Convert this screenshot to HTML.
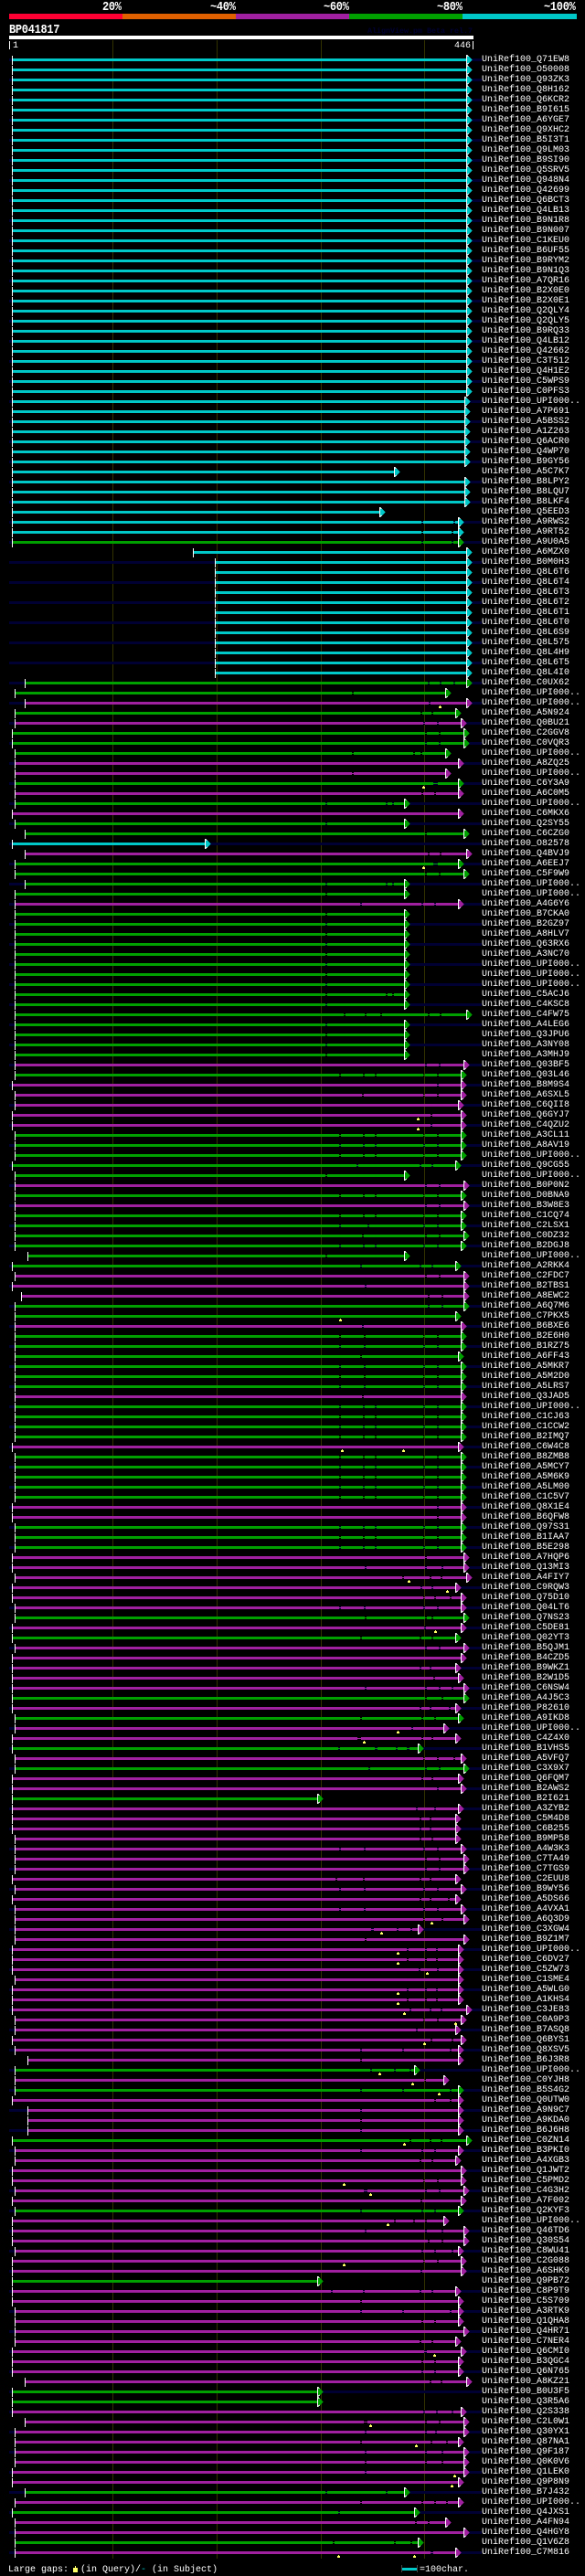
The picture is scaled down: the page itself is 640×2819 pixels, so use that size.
<!DOCTYPE html>
<html><head><meta charset="utf-8"><title>BP041817</title>
<style>
html,body{margin:0;padding:0;background:#000}
body{position:relative;width:640px;height:2819px;overflow:hidden;color:#fff;font:10px/11px "Liberation Mono","DejaVu Sans Mono",monospace}
.a{position:absolute;white-space:pre}
.b{font:bold 12px/13px "Liberation Mono",monospace;letter-spacing:-.3px;transform-origin:0 0;transform:scaleY(1.12)}
.l{position:absolute;top:44px;width:1px;height:2756px;background:#333300}
#R{position:absolute;left:0;top:60px;width:640px}
#R p{margin:0;height:11px;line-height:11px;padding-left:527px;position:relative;white-space:pre}
#R p:nth-child(odd){background:linear-gradient(#000033,#000033) no-repeat 10px 4px/517px 3px}
#R svg{position:absolute;left:0;top:0;width:640px;height:11px;overflow:visible;shape-rendering:crispEdges}
#R path{stroke:currentColor;stroke-width:3;fill:none}
#R path.h{stroke-width:1}
#D .w{stroke:#fff;stroke-width:1;fill:none;shape-rendering:crispEdges}
#D .f{stroke:none;fill:currentColor;shape-rendering:crispEdges}
#D .y{stroke:none;fill:#ffff66;shape-rendering:crispEdges}
.c{color:#00c8c8}.g{color:#00a000}.m{color:#a020a0}
</style></head><body>
<svg id="D" width="0" height="0" style="position:absolute"><defs>
<g id="a"><path class="f" d="M1 0L6.500 5.500 1 11z"/><path class="w" d="M.5 0V11"/><path class="w" d="M1 .5l1.500 1.500M1 10.500l1.500-1.500"/></g>
<path id="t" class="w" d="M.5 1V11"/>
<path id="y" class="y" d="M1 8h1v1h1v2h-3v-2h1z"/>
</defs></svg>

<div class="a b" style="left:112px;top:1px">20%</div>
<div class="a b" style="left:230px;top:1px">~40%</div>
<div class="a b" style="left:354px;top:1px">~60%</div>
<div class="a b" style="left:478px;top:1px">~80%</div>
<div class="a b" style="left:595px;top:1px">~100%</div>
<div class="a" style="left:10px;top:15px;width:124px;height:6px;background:#ff0033"></div>
<div class="a" style="left:134px;top:15px;width:124px;height:6px;background:#e06000"></div>
<div class="a" style="left:258px;top:15px;width:124px;height:6px;background:#a020a0"></div>
<div class="a" style="left:382px;top:15px;width:124px;height:6px;background:#00a000"></div>
<div class="a" style="left:506px;top:15px;width:125px;height:6px;background:#00c8c8"></div>
<div class="a b" style="left:10px;top:26px">BP041817</div>
<div class="a" style="left:402px;top:29px;font:bold 8.33px/10px 'Liberation Mono',monospace;color:#000033">AlignView.pm Beta rel.7</div>
<div class="a" style="left:10px;top:39px;width:508px;height:4px;background:#fff"></div>
<div class="a" style="left:10px;top:45px;width:1px;height:9px;background:#fff"></div>
<div class="a" style="left:14px;top:45px">1</div>
<div class="a" style="left:497px;top:45px">446</div>
<div class="a" style="left:517px;top:45px;width:1px;height:9px;background:#fff"></div>
<div class="l" style="left:123px"></div><div class="l" style="left:237px"></div><div class="l" style="left:351px"></div><div class="l" style="left:464px"></div>

<div id="R">
<p><svg class="c"><path d="M14 5.5H510"/><use href="#a" x="510"/><use href="#t" x="13"/></svg>UniRef100_Q71EW8</p>
<p><svg class="c"><path d="M14 5.5H510"/><use href="#a" x="510"/><use href="#t" x="13"/></svg>UniRef100_O50008</p>
<p><svg class="c"><path d="M14 5.5H510"/><use href="#a" x="510"/><use href="#t" x="13"/></svg>UniRef100_Q93ZK3</p>
<p><svg class="c"><path d="M14 5.5H510"/><use href="#a" x="510"/><use href="#t" x="13"/></svg>UniRef100_Q8H162</p>
<p><svg class="c"><path d="M14 5.5H510"/><use href="#a" x="510"/><use href="#t" x="13"/></svg>UniRef100_Q6KCR2</p>
<p><svg class="c"><path d="M14 5.5H510"/><use href="#a" x="510"/><use href="#t" x="13"/></svg>UniRef100_B9I615</p>
<p><svg class="c"><path d="M14 5.5H510"/><use href="#a" x="510"/><use href="#t" x="13"/></svg>UniRef100_A6YGE7</p>
<p><svg class="c"><path d="M14 5.5H510"/><use href="#a" x="510"/><use href="#t" x="13"/></svg>UniRef100_Q9XHC2</p>
<p><svg class="c"><path d="M14 5.5H510"/><use href="#a" x="510"/><use href="#t" x="13"/></svg>UniRef100_B5I3T1</p>
<p><svg class="c"><path d="M14 5.5H510"/><use href="#a" x="510"/><use href="#t" x="13"/></svg>UniRef100_Q9LM03</p>
<p><svg class="c"><path d="M14 5.5H510"/><use href="#a" x="510"/><use href="#t" x="13"/></svg>UniRef100_B9SI90</p>
<p><svg class="c"><path d="M14 5.5H510"/><use href="#a" x="510"/><use href="#t" x="13"/></svg>UniRef100_Q5SRV5</p>
<p><svg class="c"><path d="M14 5.5H510"/><use href="#a" x="510"/><use href="#t" x="13"/></svg>UniRef100_Q948N4</p>
<p><svg class="c"><path d="M14 5.5H510"/><use href="#a" x="510"/><use href="#t" x="13"/></svg>UniRef100_Q42699</p>
<p><svg class="c"><path d="M14 5.5H510"/><use href="#a" x="510"/><use href="#t" x="13"/></svg>UniRef100_Q6BCT3</p>
<p><svg class="c"><path d="M14 5.5H510"/><use href="#a" x="510"/><use href="#t" x="13"/></svg>UniRef100_Q4LB13</p>
<p><svg class="c"><path d="M14 5.5H510"/><use href="#a" x="510"/><use href="#t" x="13"/></svg>UniRef100_B9N1R8</p>
<p><svg class="c"><path d="M14 5.5H510"/><use href="#a" x="510"/><use href="#t" x="13"/></svg>UniRef100_B9N007</p>
<p><svg class="c"><path d="M14 5.5H510"/><use href="#a" x="510"/><use href="#t" x="13"/></svg>UniRef100_C1KEU0</p>
<p><svg class="c"><path d="M14 5.5H510"/><use href="#a" x="510"/><use href="#t" x="13"/></svg>UniRef100_B6UF55</p>
<p><svg class="c"><path d="M14 5.5H510"/><use href="#a" x="510"/><use href="#t" x="13"/></svg>UniRef100_B9RYM2</p>
<p><svg class="c"><path d="M14 5.5H510"/><use href="#a" x="510"/><use href="#t" x="13"/></svg>UniRef100_B9N1Q3</p>
<p><svg class="c"><path d="M14 5.5H510"/><use href="#a" x="510"/><use href="#t" x="13"/></svg>UniRef100_A7QR16</p>
<p><svg class="c"><path d="M14 5.5H510"/><use href="#a" x="510"/><use href="#t" x="13"/></svg>UniRef100_B2X0E0</p>
<p><svg class="c"><path d="M14 5.5H510"/><use href="#a" x="510"/><use href="#t" x="13"/></svg>UniRef100_B2X0E1</p>
<p><svg class="c"><path d="M14 5.5H510"/><use href="#a" x="510"/><use href="#t" x="13"/></svg>UniRef100_Q2QLY4</p>
<p><svg class="c"><path d="M14 5.5H510"/><use href="#a" x="510"/><use href="#t" x="13"/></svg>UniRef100_Q2QLY5</p>
<p><svg class="c"><path d="M14 5.5H510"/><use href="#a" x="510"/><use href="#t" x="13"/></svg>UniRef100_B9RQ33</p>
<p><svg class="c"><path d="M14 5.5H510"/><use href="#a" x="510"/><use href="#t" x="13"/></svg>UniRef100_Q4LB12</p>
<p><svg class="c"><path d="M14 5.5H510"/><use href="#a" x="510"/><use href="#t" x="13"/></svg>UniRef100_Q42662</p>
<p><svg class="c"><path d="M14 5.5H510"/><use href="#a" x="510"/><use href="#t" x="13"/></svg>UniRef100_C3T512</p>
<p><svg class="c"><path d="M14 5.5H510"/><use href="#a" x="510"/><use href="#t" x="13"/></svg>UniRef100_Q4H1E2</p>
<p><svg class="c"><path d="M14 5.5H510"/><use href="#a" x="510"/><use href="#t" x="13"/></svg>UniRef100_C5WPS9</p>
<p><svg class="c"><path d="M14 5.5H510"/><use href="#a" x="510"/><use href="#t" x="13"/></svg>UniRef100_C0PFS3</p>
<p><svg class="c"><path d="M14 5.5H508"/><use href="#a" x="508"/><use href="#t" x="13"/></svg>UniRef100_UPI000..</p>
<p><svg class="c"><path d="M14 5.5H508"/><use href="#a" x="508"/><use href="#t" x="13"/></svg>UniRef100_A7P691</p>
<p><svg class="c"><path d="M14 5.5H508"/><use href="#a" x="508"/><use href="#t" x="13"/></svg>UniRef100_A5BSS2</p>
<p><svg class="c"><path d="M14 5.5H508"/><use href="#a" x="508"/><use href="#t" x="13"/></svg>UniRef100_A1Z263</p>
<p><svg class="c"><path d="M14 5.5H508"/><use href="#a" x="508"/><use href="#t" x="13"/></svg>UniRef100_Q6ACR0</p>
<p><svg class="c"><path d="M14 5.5H508"/><use href="#a" x="508"/><use href="#t" x="13"/></svg>UniRef100_Q4WP70</p>
<p><svg class="c"><path d="M14 5.5H508"/><use href="#a" x="508"/><use href="#t" x="13"/></svg>UniRef100_B9GY56</p>
<p><svg class="c"><path d="M14 5.5H431"/><use href="#a" x="431"/><use href="#t" x="13"/></svg>UniRef100_A5C7K7</p>
<p><svg class="c"><path d="M14 5.5H508"/><use href="#a" x="508"/><use href="#t" x="13"/></svg>UniRef100_B8LPY2</p>
<p><svg class="c"><path d="M14 5.5H508"/><use href="#a" x="508"/><use href="#t" x="13"/></svg>UniRef100_B8LQU7</p>
<p><svg class="c"><path d="M14 5.5H508"/><use href="#a" x="508"/><use href="#t" x="13"/></svg>UniRef100_B8LKF4</p>
<p><svg class="c"><path d="M14 5.5H415"/><use href="#a" x="415"/><use href="#t" x="13"/></svg>UniRef100_Q5EED3</p>
<p><svg class="c"><path class="h" d="M14 5.5H501"/><path d="M14 5.5H461m2 0H496m2 0H501"/><use href="#a" x="501"/><use href="#t" x="13"/></svg>UniRef100_A9RWS2</p>
<p><svg class="c"><path class="h" d="M14 5.5H501"/><path d="M14 5.5H461m2 0H494m2 0H501"/><use href="#a" x="501"/><use href="#t" x="13"/></svg>UniRef100_A9RT52</p>
<p><svg class="g"><path class="h" d="M14 5.5H501"/><path d="M14 5.5H461m2 0H494m2 0H501"/><use href="#a" x="501"/><use href="#t" x="13"/></svg>UniRef100_A9U0A5</p>
<p><svg class="c"><path d="M212 5.5H510"/><use href="#a" x="510"/><use href="#t" x="211"/></svg>UniRef100_A6MZX0</p>
<p><svg class="c"><path d="M236 5.5H510"/><use href="#a" x="510"/><use href="#t" x="235"/></svg>UniRef100_B0M0H3</p>
<p><svg class="c"><path d="M236 5.5H510"/><use href="#a" x="510"/><use href="#t" x="235"/></svg>UniRef100_Q8L6T6</p>
<p><svg class="c"><path d="M236 5.5H510"/><use href="#a" x="510"/><use href="#t" x="235"/></svg>UniRef100_Q8L6T4</p>
<p><svg class="c"><path d="M236 5.5H510"/><use href="#a" x="510"/><use href="#t" x="235"/></svg>UniRef100_Q8L6T3</p>
<p><svg class="c"><path d="M236 5.5H510"/><use href="#a" x="510"/><use href="#t" x="235"/></svg>UniRef100_Q8L6T2</p>
<p><svg class="c"><path d="M236 5.5H510"/><use href="#a" x="510"/><use href="#t" x="235"/></svg>UniRef100_Q8L6T1</p>
<p><svg class="c"><path d="M236 5.5H510"/><use href="#a" x="510"/><use href="#t" x="235"/></svg>UniRef100_Q8L6T0</p>
<p><svg class="c"><path d="M236 5.5H510"/><use href="#a" x="510"/><use href="#t" x="235"/></svg>UniRef100_Q8L6S9</p>
<p><svg class="c"><path d="M236 5.5H510"/><use href="#a" x="510"/><use href="#t" x="235"/></svg>UniRef100_Q8L575</p>
<p><svg class="c"><path d="M236 5.5H510"/><use href="#a" x="510"/><use href="#t" x="235"/></svg>UniRef100_Q8L4H9</p>
<p><svg class="c"><path d="M236 5.5H510"/><use href="#a" x="510"/><use href="#t" x="235"/></svg>UniRef100_Q8L6T5</p>
<p><svg class="c"><path d="M236 5.5H510"/><use href="#a" x="510"/><use href="#t" x="235"/></svg>UniRef100_Q8L4I0</p>
<p><svg class="g"><path class="h" d="M28 5.5H510"/><path d="M28 5.5H468m2 0H481m2 0H496m2 0H510"/><use href="#a" x="510"/><use href="#t" x="27"/></svg>UniRef100_C0UX62</p>
<p><svg class="g"><path class="h" d="M17 5.5H487"/><path d="M17 5.5H385m2 0H487"/><use href="#a" x="487"/><use href="#t" x="16"/></svg>UniRef100_UPI000..</p>
<p><svg class="m"><path class="h" d="M28 5.5H510"/><path d="M28 5.5H469m2 0H510"/><use href="#a" x="510"/><use href="#t" x="27"/><use href="#y" x="480"/></svg>UniRef100_UPI000..</p>
<p><svg class="g"><path class="h" d="M17 5.5H498"/><path d="M17 5.5H460m2 0H472m2 0H498"/><use href="#a" x="498"/><use href="#t" x="16"/></svg>UniRef100_A5N924</p>
<p><svg class="m"><path class="h" d="M17 5.5H504"/><path d="M17 5.5H463m2 0H478m2 0H504"/><use href="#a" x="504"/><use href="#t" x="16"/></svg>UniRef100_Q0BU21</p>
<p><svg class="g"><path class="h" d="M14 5.5H507"/><path d="M14 5.5H465m2 0H480m2 0H507"/><use href="#a" x="507"/><use href="#t" x="13"/></svg>UniRef100_C2GGV8</p>
<p><svg class="g"><path class="h" d="M14 5.5H507"/><path d="M14 5.5H465m2 0H480m2 0H507"/><use href="#a" x="507"/><use href="#t" x="13"/></svg>UniRef100_C0VQR3</p>
<p><svg class="g"><path class="h" d="M17 5.5H487"/><path d="M17 5.5H385m2 0H452m2 0H460m2 0H487"/><use href="#a" x="487"/><use href="#t" x="16"/></svg>UniRef100_UPI000..</p>
<p><svg class="m"><path d="M17 5.5H501"/><use href="#a" x="501"/><use href="#t" x="16"/></svg>UniRef100_A8ZQ25</p>
<p><svg class="m"><path class="h" d="M17 5.5H487"/><path d="M17 5.5H385m2 0H487"/><use href="#a" x="487"/><use href="#t" x="16"/></svg>UniRef100_UPI000..</p>
<p><svg class="g"><path class="h" d="M17 5.5H501"/><path d="M17 5.5H474M479 5.5H501"/><use href="#a" x="501"/><use href="#t" x="16"/><use href="#y" x="462"/></svg>UniRef100_C6Y3A9</p>
<p><svg class="m"><path class="h" d="M17 5.5H501"/><path d="M17 5.5H461m2 0H475m2 0H501"/><use href="#a" x="501"/><use href="#t" x="16"/></svg>UniRef100_A6C0M5</p>
<p><svg class="g"><path class="h" d="M17 5.5H442"/><path d="M17 5.5H356m2 0H422m2 0H429m2 0H442"/><use href="#a" x="442"/><use href="#t" x="16"/></svg>UniRef100_UPI000..</p>
<p><svg class="m"><path d="M14 5.5H501"/><use href="#a" x="501"/><use href="#t" x="13"/></svg>UniRef100_C6MKX6</p>
<p><svg class="g"><path class="h" d="M17 5.5H442"/><path d="M17 5.5H356m2 0H442"/><use href="#a" x="442"/><use href="#t" x="16"/></svg>UniRef100_Q2SY55</p>
<p><svg class="g"><path class="h" d="M28 5.5H507"/><path d="M28 5.5H465m2 0H507"/><use href="#a" x="507"/><use href="#t" x="27"/></svg>UniRef100_C6CZG0</p>
<p><svg class="c"><path d="M14 5.5H224"/><use href="#a" x="224"/><use href="#t" x="13"/></svg>UniRef100_O82578</p>
<p><svg class="m"><path class="h" d="M28 5.5H510"/><path d="M28 5.5H468m2 0H481m2 0H510"/><use href="#a" x="510"/><use href="#t" x="27"/></svg>UniRef100_Q4BVJ9</p>
<p><svg class="g"><path class="h" d="M17 5.5H501"/><path d="M17 5.5H474M479 5.5H501"/><use href="#a" x="501"/><use href="#t" x="16"/><use href="#y" x="462"/></svg>UniRef100_A6EEJ7</p>
<p><svg class="g"><path class="h" d="M17 5.5H507"/><path d="M17 5.5H465m2 0H480m2 0H507"/><use href="#a" x="507"/><use href="#t" x="16"/></svg>UniRef100_C5F9W9</p>
<p><svg class="g"><path class="h" d="M28 5.5H442"/><path d="M28 5.5H356m2 0H422m2 0H429m2 0H442"/><use href="#a" x="442"/><use href="#t" x="27"/></svg>UniRef100_UPI000..</p>
<p><svg class="g"><path class="h" d="M17 5.5H442"/><path d="M17 5.5H356m2 0H442"/><use href="#a" x="442"/><use href="#t" x="16"/></svg>UniRef100_UPI000..</p>
<p><svg class="m"><path class="h" d="M17 5.5H501"/><path d="M17 5.5H394m2 0H461m2 0H475m2 0H501"/><use href="#a" x="501"/><use href="#t" x="16"/></svg>UniRef100_A4G6Y6</p>
<p><svg class="g"><path class="h" d="M17 5.5H442"/><path d="M17 5.5H356m2 0H442"/><use href="#a" x="442"/><use href="#t" x="16"/></svg>UniRef100_B7CKA0</p>
<p><svg class="g"><path class="h" d="M17 5.5H442"/><path d="M17 5.5H356m2 0H442"/><use href="#a" x="442"/><use href="#t" x="16"/></svg>UniRef100_B2GZ97</p>
<p><svg class="g"><path class="h" d="M17 5.5H442"/><path d="M17 5.5H356m2 0H442"/><use href="#a" x="442"/><use href="#t" x="16"/></svg>UniRef100_A8HLV7</p>
<p><svg class="g"><path class="h" d="M17 5.5H442"/><path d="M17 5.5H356m2 0H442"/><use href="#a" x="442"/><use href="#t" x="16"/></svg>UniRef100_Q63RX6</p>
<p><svg class="g"><path class="h" d="M17 5.5H442"/><path d="M17 5.5H356m2 0H442"/><use href="#a" x="442"/><use href="#t" x="16"/></svg>UniRef100_A3NC70</p>
<p><svg class="g"><path class="h" d="M17 5.5H442"/><path d="M17 5.5H356m2 0H442"/><use href="#a" x="442"/><use href="#t" x="16"/></svg>UniRef100_UPI000..</p>
<p><svg class="g"><path class="h" d="M17 5.5H442"/><path d="M17 5.5H356m2 0H442"/><use href="#a" x="442"/><use href="#t" x="16"/></svg>UniRef100_UPI000..</p>
<p><svg class="g"><path class="h" d="M17 5.5H442"/><path d="M17 5.5H356m2 0H442"/><use href="#a" x="442"/><use href="#t" x="16"/></svg>UniRef100_UPI000..</p>
<p><svg class="g"><path class="h" d="M17 5.5H442"/><path d="M17 5.5H356m2 0H422m2 0H429m2 0H442"/><use href="#a" x="442"/><use href="#t" x="16"/></svg>UniRef100_C5ACJ6</p>
<p><svg class="g"><path class="h" d="M17 5.5H442"/><path d="M17 5.5H356m2 0H442"/><use href="#a" x="442"/><use href="#t" x="16"/></svg>UniRef100_C4KSC8</p>
<p><svg class="g"><path class="h" d="M17 5.5H510"/><path d="M17 5.5H376m2 0H399m2 0H416m2 0H468m2 0H481m2 0H510"/><use href="#a" x="510"/><use href="#t" x="16"/></svg>UniRef100_C4FW75</p>
<p><svg class="g"><path class="h" d="M17 5.5H442"/><path d="M17 5.5H356m2 0H442"/><use href="#a" x="442"/><use href="#t" x="16"/></svg>UniRef100_A4LEG6</p>
<p><svg class="g"><path class="h" d="M17 5.5H442"/><path d="M17 5.5H356m2 0H442"/><use href="#a" x="442"/><use href="#t" x="16"/></svg>UniRef100_Q3JPU6</p>
<p><svg class="g"><path class="h" d="M17 5.5H442"/><path d="M17 5.5H356m2 0H442"/><use href="#a" x="442"/><use href="#t" x="16"/></svg>UniRef100_A3NY08</p>
<p><svg class="g"><path class="h" d="M17 5.5H442"/><path d="M17 5.5H356m2 0H442"/><use href="#a" x="442"/><use href="#t" x="16"/></svg>UniRef100_A3MHJ9</p>
<p><svg class="m"><path class="h" d="M17 5.5H507"/><path d="M17 5.5H465m2 0H480m2 0H507"/><use href="#a" x="507"/><use href="#t" x="16"/></svg>UniRef100_Q03BF5</p>
<p><svg class="g"><path class="h" d="M17 5.5H504"/><path d="M17 5.5H371m2 0H397m2 0H410m2 0H463m2 0H478m2 0H504"/><use href="#a" x="504"/><use href="#t" x="16"/></svg>UniRef100_Q03L46</p>
<p><svg class="m"><path class="h" d="M14 5.5H504"/><path d="M14 5.5H478m2 0H504"/><use href="#a" x="504"/><use href="#t" x="13"/></svg>UniRef100_B8M9S4</p>
<p><svg class="m"><path class="h" d="M17 5.5H504"/><path d="M17 5.5H396m2 0H463m2 0H478m2 0H504"/><use href="#a" x="504"/><use href="#t" x="16"/></svg>UniRef100_A6SXL5</p>
<p><svg class="m"><path d="M17 5.5H501"/><use href="#a" x="501"/><use href="#t" x="16"/></svg>UniRef100_C6QII8</p>
<p><svg class="m"><path class="h" d="M14 5.5H504"/><path d="M14 5.5H471m2 0H504"/><use href="#a" x="504"/><use href="#t" x="13"/><use href="#y" x="456"/></svg>UniRef100_Q6GYJ7</p>
<p><svg class="m"><path class="h" d="M14 5.5H504"/><path d="M14 5.5H471m2 0H504"/><use href="#a" x="504"/><use href="#t" x="13"/><use href="#y" x="456"/></svg>UniRef100_C4QZU2</p>
<p><svg class="g"><path class="h" d="M17 5.5H504"/><path d="M17 5.5H371m2 0H397m2 0H410m2 0H463m2 0H478m2 0H504"/><use href="#a" x="504"/><use href="#t" x="16"/></svg>UniRef100_A3CL11</p>
<p><svg class="g"><path class="h" d="M17 5.5H504"/><path d="M17 5.5H371m2 0H397m2 0H410m2 0H463m2 0H478m2 0H504"/><use href="#a" x="504"/><use href="#t" x="16"/></svg>UniRef100_A8AV19</p>
<p><svg class="g"><path class="h" d="M17 5.5H504"/><path d="M17 5.5H371m2 0H397m2 0H410m2 0H463m2 0H478m2 0H504"/><use href="#a" x="504"/><use href="#t" x="16"/></svg>UniRef100_UPI000..</p>
<p><svg class="g"><path class="h" d="M14 5.5H498"/><path d="M14 5.5H390m2 0H459m2 0H472m2 0H498"/><use href="#a" x="498"/><use href="#t" x="13"/></svg>UniRef100_Q9CG55</p>
<p><svg class="g"><path class="h" d="M17 5.5H442"/><path d="M17 5.5H356m2 0H442"/><use href="#a" x="442"/><use href="#t" x="16"/></svg>UniRef100_UPI000..</p>
<p><svg class="m"><path class="h" d="M17 5.5H507"/><path d="M17 5.5H465m2 0H480m2 0H507"/><use href="#a" x="507"/><use href="#t" x="16"/></svg>UniRef100_B0P0N2</p>
<p><svg class="g"><path class="h" d="M17 5.5H504"/><path d="M17 5.5H371m2 0H397m2 0H410m2 0H463m2 0H478m2 0H504"/><use href="#a" x="504"/><use href="#t" x="16"/></svg>UniRef100_D0BNA9</p>
<p><svg class="m"><path class="h" d="M17 5.5H507"/><path d="M17 5.5H465m2 0H480m2 0H507"/><use href="#a" x="507"/><use href="#t" x="16"/></svg>UniRef100_B3W8E3</p>
<p><svg class="g"><path class="h" d="M17 5.5H504"/><path d="M17 5.5H371m2 0H397m2 0H410m2 0H463m2 0H478m2 0H504"/><use href="#a" x="504"/><use href="#t" x="16"/></svg>UniRef100_C1CQ74</p>
<p><svg class="g"><path class="h" d="M17 5.5H504"/><path d="M17 5.5H371m2 0H402m2 0H463m2 0H478m2 0H504"/><use href="#a" x="504"/><use href="#t" x="16"/></svg>UniRef100_C2LSX1</p>
<p><svg class="g"><path class="h" d="M17 5.5H507"/><path d="M17 5.5H396m2 0H465m2 0H480m2 0H507"/><use href="#a" x="507"/><use href="#t" x="16"/></svg>UniRef100_C0DZ32</p>
<p><svg class="g"><path class="h" d="M17 5.5H504"/><path d="M17 5.5H371m2 0H397m2 0H410m2 0H463m2 0H478m2 0H504"/><use href="#a" x="504"/><use href="#t" x="16"/></svg>UniRef100_B2DGJ8</p>
<p><svg class="g"><path class="h" d="M31 5.5H442"/><path d="M31 5.5H356m2 0H442"/><use href="#a" x="442"/><use href="#t" x="30"/></svg>UniRef100_UPI000..</p>
<p><svg class="g"><path class="h" d="M14 5.5H498"/><path d="M14 5.5H394m2 0H459m2 0H472m2 0H498"/><use href="#a" x="498"/><use href="#t" x="13"/></svg>UniRef100_A2RKK4</p>
<p><svg class="m"><path class="h" d="M17 5.5H507"/><path d="M17 5.5H465m2 0H480m2 0H507"/><use href="#a" x="507"/><use href="#t" x="16"/></svg>UniRef100_C2FDC7</p>
<p><svg class="m"><path class="h" d="M14 5.5H507"/><path d="M14 5.5H399m2 0H507"/><use href="#a" x="507"/><use href="#t" x="13"/></svg>UniRef100_B2TBS1</p>
<p><svg class="m"><path class="h" d="M24 5.5H507"/><path d="M24 5.5H468m2 0H483m2 0H507"/><use href="#a" x="507"/><use href="#t" x="23"/></svg>UniRef100_A8EWC2</p>
<p><svg class="g"><path class="h" d="M17 5.5H507"/><path d="M17 5.5H468m2 0H483m2 0H507"/><use href="#a" x="507"/><use href="#t" x="16"/></svg>UniRef100_A6Q7M6</p>
<p><svg class="g"><path d="M17 5.5H498"/><use href="#a" x="498"/><use href="#t" x="16"/><use href="#y" x="371"/></svg>UniRef100_C7PKX5</p>
<p><svg class="m"><path class="h" d="M17 5.5H504"/><path d="M17 5.5H396m2 0H504"/><use href="#a" x="504"/><use href="#t" x="16"/></svg>UniRef100_B6BXE6</p>
<p><svg class="g"><path class="h" d="M17 5.5H504"/><path d="M17 5.5H371m2 0H398m2 0H463m2 0H478m2 0H504"/><use href="#a" x="504"/><use href="#t" x="16"/></svg>UniRef100_B2E6H0</p>
<p><svg class="g"><path class="h" d="M17 5.5H504"/><path d="M17 5.5H371m2 0H398m2 0H463m2 0H478m2 0H504"/><use href="#a" x="504"/><use href="#t" x="16"/></svg>UniRef100_B1RZ75</p>
<p><svg class="g"><path class="h" d="M17 5.5H501"/><path d="M17 5.5H394m2 0H501"/><use href="#a" x="501"/><use href="#t" x="16"/></svg>UniRef100_A6FF43</p>
<p><svg class="g"><path class="h" d="M17 5.5H504"/><path d="M17 5.5H371m2 0H398m2 0H463m2 0H478m2 0H504"/><use href="#a" x="504"/><use href="#t" x="16"/></svg>UniRef100_A5MKR7</p>
<p><svg class="g"><path class="h" d="M17 5.5H504"/><path d="M17 5.5H371m2 0H398m2 0H463m2 0H478m2 0H504"/><use href="#a" x="504"/><use href="#t" x="16"/></svg>UniRef100_A5M2D0</p>
<p><svg class="g"><path class="h" d="M17 5.5H504"/><path d="M17 5.5H371m2 0H398m2 0H463m2 0H478m2 0H504"/><use href="#a" x="504"/><use href="#t" x="16"/></svg>UniRef100_A5LRS7</p>
<p><svg class="m"><path class="h" d="M17 5.5H504"/><path d="M17 5.5H396m2 0H504"/><use href="#a" x="504"/><use href="#t" x="16"/></svg>UniRef100_Q3JAD5</p>
<p><svg class="g"><path class="h" d="M17 5.5H504"/><path d="M17 5.5H371m2 0H397m2 0H410m2 0H463m2 0H478m2 0H504"/><use href="#a" x="504"/><use href="#t" x="16"/></svg>UniRef100_UPI000..</p>
<p><svg class="g"><path class="h" d="M17 5.5H504"/><path d="M17 5.5H371m2 0H397m2 0H410m2 0H463m2 0H478m2 0H504"/><use href="#a" x="504"/><use href="#t" x="16"/></svg>UniRef100_C1CJ63</p>
<p><svg class="g"><path class="h" d="M17 5.5H504"/><path d="M17 5.5H371m2 0H397m2 0H410m2 0H463m2 0H478m2 0H504"/><use href="#a" x="504"/><use href="#t" x="16"/></svg>UniRef100_C1CCW2</p>
<p><svg class="g"><path class="h" d="M17 5.5H504"/><path d="M17 5.5H371m2 0H397m2 0H410m2 0H463m2 0H478m2 0H504"/><use href="#a" x="504"/><use href="#t" x="16"/></svg>UniRef100_B2IMQ7</p>
<p><svg class="m"><path d="M14 5.5H501"/><use href="#a" x="501"/><use href="#t" x="13"/><use href="#y" x="373"/><use href="#y" x="440"/></svg>UniRef100_C6W4C8</p>
<p><svg class="g"><path class="h" d="M17 5.5H504"/><path d="M17 5.5H371m2 0H397m2 0H410m2 0H463m2 0H478m2 0H504"/><use href="#a" x="504"/><use href="#t" x="16"/></svg>UniRef100_B8ZMB8</p>
<p><svg class="g"><path class="h" d="M17 5.5H504"/><path d="M17 5.5H371m2 0H397m2 0H410m2 0H463m2 0H478m2 0H504"/><use href="#a" x="504"/><use href="#t" x="16"/></svg>UniRef100_A5MCY7</p>
<p><svg class="g"><path class="h" d="M17 5.5H504"/><path d="M17 5.5H371m2 0H397m2 0H410m2 0H463m2 0H478m2 0H504"/><use href="#a" x="504"/><use href="#t" x="16"/></svg>UniRef100_A5M6K9</p>
<p><svg class="g"><path class="h" d="M17 5.5H504"/><path d="M17 5.5H371m2 0H397m2 0H410m2 0H463m2 0H478m2 0H504"/><use href="#a" x="504"/><use href="#t" x="16"/></svg>UniRef100_A5LM00</p>
<p><svg class="g"><path class="h" d="M17 5.5H504"/><path d="M17 5.5H371m2 0H397m2 0H410m2 0H463m2 0H478m2 0H504"/><use href="#a" x="504"/><use href="#t" x="16"/></svg>UniRef100_C1C5V7</p>
<p><svg class="m"><path class="h" d="M14 5.5H504"/><path d="M14 5.5H478m2 0H504"/><use href="#a" x="504"/><use href="#t" x="13"/></svg>UniRef100_Q8X1E4</p>
<p><svg class="m"><path class="h" d="M14 5.5H504"/><path d="M14 5.5H478m2 0H504"/><use href="#a" x="504"/><use href="#t" x="13"/></svg>UniRef100_B6QFW8</p>
<p><svg class="g"><path class="h" d="M17 5.5H504"/><path d="M17 5.5H371m2 0H397m2 0H410m2 0H463m2 0H478m2 0H504"/><use href="#a" x="504"/><use href="#t" x="16"/></svg>UniRef100_Q97S31</p>
<p><svg class="g"><path class="h" d="M17 5.5H504"/><path d="M17 5.5H371m2 0H397m2 0H410m2 0H463m2 0H478m2 0H504"/><use href="#a" x="504"/><use href="#t" x="16"/></svg>UniRef100_B1IAA7</p>
<p><svg class="g"><path class="h" d="M17 5.5H504"/><path d="M17 5.5H371m2 0H397m2 0H410m2 0H463m2 0H478m2 0H504"/><use href="#a" x="504"/><use href="#t" x="16"/></svg>UniRef100_B5E298</p>
<p><svg class="m"><path class="h" d="M14 5.5H507"/><path d="M14 5.5H465m2 0H507"/><use href="#a" x="507"/><use href="#t" x="13"/></svg>UniRef100_A7HQP6</p>
<p><svg class="m"><path class="h" d="M14 5.5H507"/><path d="M14 5.5H399m2 0H465m2 0H483m2 0H507"/><use href="#a" x="507"/><use href="#t" x="13"/></svg>UniRef100_Q13MI3</p>
<p><svg class="m"><path class="h" d="M17 5.5H510"/><path d="M17 5.5H440m2 0H470m2 0H482m2 0H510"/><use href="#a" x="510"/><use href="#t" x="16"/><use href="#y" x="446"/></svg>UniRef100_A4FIY7</p>
<p><svg class="m"><path class="h" d="M14 5.5H498"/><path d="M14 5.5H460m2 0H472m2 0H498"/><use href="#a" x="498"/><use href="#t" x="13"/><use href="#y" x="488"/></svg>UniRef100_C9RQW3</p>
<p><svg class="m"><path class="h" d="M14 5.5H504"/><path d="M14 5.5H463m2 0H475m2 0H492m2 0H504"/><use href="#a" x="504"/><use href="#t" x="13"/></svg>UniRef100_Q75D10</p>
<p><svg class="m"><path class="h" d="M17 5.5H504"/><path d="M17 5.5H371m2 0H398m2 0H463m2 0H478m2 0H504"/><use href="#a" x="504"/><use href="#t" x="16"/></svg>UniRef100_Q04LT6</p>
<p><svg class="g"><path class="h" d="M17 5.5H507"/><path d="M17 5.5H399m2 0H465m2 0H472m2 0H507"/><use href="#a" x="507"/><use href="#t" x="16"/></svg>UniRef100_Q7NS23</p>
<p><svg class="m"><path class="h" d="M14 5.5H504"/><path d="M14 5.5H464m2 0H504"/><use href="#a" x="504"/><use href="#t" x="13"/><use href="#y" x="475"/></svg>UniRef100_C5DE81</p>
<p><svg class="g"><path class="h" d="M14 5.5H498"/><path d="M14 5.5H394m2 0H459m2 0H472m2 0H498"/><use href="#a" x="498"/><use href="#t" x="13"/></svg>UniRef100_Q02YT3</p>
<p><svg class="m"><path class="h" d="M17 5.5H507"/><path d="M17 5.5H465m2 0H480m2 0H507"/><use href="#a" x="507"/><use href="#t" x="16"/></svg>UniRef100_B5QJM1</p>
<p><svg class="m"><path d="M14 5.5H504"/><use href="#a" x="504"/><use href="#t" x="13"/></svg>UniRef100_B4CZD5</p>
<p><svg class="m"><path class="h" d="M14 5.5H498"/><path d="M14 5.5H459m2 0H470m2 0H498"/><use href="#a" x="498"/><use href="#t" x="13"/></svg>UniRef100_B9WKZ1</p>
<p><svg class="m"><path class="h" d="M14 5.5H501"/><path d="M14 5.5H474m2 0H501"/><use href="#a" x="501"/><use href="#t" x="13"/></svg>UniRef100_B2W1D5</p>
<p><svg class="m"><path class="h" d="M14 5.5H507"/><path d="M14 5.5H399m2 0H465m2 0H480m2 0H494m2 0H507"/><use href="#a" x="507"/><use href="#t" x="13"/></svg>UniRef100_C6NSW4</p>
<p><svg class="g"><path class="h" d="M14 5.5H507"/><path d="M14 5.5H465m2 0H483m2 0H507"/><use href="#a" x="507"/><use href="#t" x="13"/></svg>UniRef100_A4J5C3</p>
<p><svg class="m"><path class="h" d="M14 5.5H498"/><path d="M14 5.5H459m2 0H470m2 0H491m2 0H498"/><use href="#a" x="498"/><use href="#t" x="13"/></svg>UniRef100_P82610</p>
<p><svg class="g"><path class="h" d="M17 5.5H501"/><path d="M17 5.5H394m2 0H461m2 0H475m2 0H501"/><use href="#a" x="501"/><use href="#t" x="16"/></svg>UniRef100_A9IKD8</p>
<p><svg class="m"><path class="h" d="M17 5.5H485"/><path d="M17 5.5H450m2 0H485"/><use href="#a" x="485"/><use href="#t" x="16"/><use href="#y" x="434"/></svg>UniRef100_UPI000..</p>
<p><svg class="m"><path class="h" d="M14 5.5H498"/><path d="M14 5.5H391m4 0H461m2 0H472m2 0H498"/><use href="#a" x="498"/><use href="#t" x="13"/><use href="#y" x="397"/></svg>UniRef100_C4Z4X0</p>
<p><svg class="g"><path class="h" d="M14 5.5H457"/><path d="M14 5.5H370m2 0H410m3 0H433m2 0H445m3 0H457"/><use href="#a" x="457"/><use href="#t" x="13"/></svg>UniRef100_B1VHS5</p>
<p><svg class="m"><path class="h" d="M17 5.5H504"/><path d="M17 5.5H463m2 0H478m2 0H496m2 0H504"/><use href="#a" x="504"/><use href="#t" x="16"/></svg>UniRef100_A5VFQ7</p>
<p><svg class="g"><path class="h" d="M17 5.5H507"/><path d="M17 5.5H403m2 0H465m2 0H480m2 0H507"/><use href="#a" x="507"/><use href="#t" x="16"/></svg>UniRef100_C3X9X7</p>
<p><svg class="m"><path class="h" d="M14 5.5H501"/><path d="M14 5.5H461m2 0H472m2 0H501"/><use href="#a" x="501"/><use href="#t" x="13"/></svg>UniRef100_Q6FQM7</p>
<p><svg class="m"><path class="h" d="M14 5.5H504"/><path d="M14 5.5H478m2 0H504"/><use href="#a" x="504"/><use href="#t" x="13"/></svg>UniRef100_B2AWS2</p>
<p><svg class="g"><path d="M14 5.5H347"/><use href="#a" x="347"/><use href="#t" x="13"/></svg>UniRef100_B2I621</p>
<p><svg class="m"><path class="h" d="M14 5.5H501"/><path d="M14 5.5H455m2 0H475m2 0H501"/><use href="#a" x="501"/><use href="#t" x="13"/></svg>UniRef100_A3ZYB2</p>
<p><svg class="m"><path class="h" d="M14 5.5H498"/><path d="M14 5.5H459m2 0H470m2 0H498"/><use href="#a" x="498"/><use href="#t" x="13"/></svg>UniRef100_C5M4D8</p>
<p><svg class="m"><path class="h" d="M14 5.5H498"/><path d="M14 5.5H459m2 0H470m2 0H498"/><use href="#a" x="498"/><use href="#t" x="13"/></svg>UniRef100_C6B255</p>
<p><svg class="m"><path class="h" d="M17 5.5H498"/><path d="M17 5.5H459m2 0H472m2 0H498"/><use href="#a" x="498"/><use href="#t" x="16"/></svg>UniRef100_B9MP58</p>
<p><svg class="m"><path class="h" d="M17 5.5H504"/><path d="M17 5.5H371m2 0H398m2 0H463m2 0H478m2 0H504"/><use href="#a" x="504"/><use href="#t" x="16"/></svg>UniRef100_A4W3K3</p>
<p><svg class="m"><path class="h" d="M17 5.5H507"/><path d="M17 5.5H465m2 0H480m2 0H507"/><use href="#a" x="507"/><use href="#t" x="16"/></svg>UniRef100_C7TA49</p>
<p><svg class="m"><path class="h" d="M17 5.5H507"/><path d="M17 5.5H465m2 0H480m2 0H507"/><use href="#a" x="507"/><use href="#t" x="16"/></svg>UniRef100_C7TGS9</p>
<p><svg class="m"><path class="h" d="M14 5.5H498"/><path d="M14 5.5H367m2 0H397m2 0H459m2 0H470m2 0H498"/><use href="#a" x="498"/><use href="#t" x="13"/></svg>UniRef100_C2EUU8</p>
<p><svg class="m"><path class="h" d="M17 5.5H504"/><path d="M17 5.5H371m2 0H398m2 0H463m2 0H478m2 0H504"/><use href="#a" x="504"/><use href="#t" x="16"/></svg>UniRef100_B9WY56</p>
<p><svg class="m"><path class="h" d="M14 5.5H498"/><path d="M14 5.5H459m2 0H470m2 0H490m2 0H498"/><use href="#a" x="498"/><use href="#t" x="13"/></svg>UniRef100_A5DS66</p>
<p><svg class="m"><path class="h" d="M17 5.5H504"/><path d="M17 5.5H371m2 0H398m2 0H463m2 0H478m2 0H504"/><use href="#a" x="504"/><use href="#t" x="16"/></svg>UniRef100_A4VXA1</p>
<p><svg class="m"><path class="h" d="M17 5.5H507"/><path d="M17 5.5H463m2 0H483m2 0H507"/><use href="#a" x="507"/><use href="#t" x="16"/><use href="#y" x="471"/></svg>UniRef100_A6Q3D9</p>
<p><svg class="m"><path class="h" d="M17 5.5H457"/><path d="M17 5.5H406m3 0H434m2 0H449m2 0H457"/><use href="#a" x="457"/><use href="#t" x="16"/><use href="#y" x="416"/></svg>UniRef100_C3XGW4</p>
<p><svg class="m"><path class="h" d="M17 5.5H507"/><path d="M17 5.5H399m2 0H507"/><use href="#a" x="507"/><use href="#t" x="16"/></svg>UniRef100_B9Z1M7</p>
<p><svg class="m"><path class="h" d="M14 5.5H501"/><path d="M14 5.5H445m2 0H465m2 0H477m2 0H501"/><use href="#a" x="501"/><use href="#t" x="13"/><use href="#y" x="434"/></svg>UniRef100_UPI000..</p>
<p><svg class="m"><path class="h" d="M14 5.5H501"/><path d="M14 5.5H445m2 0H465m2 0H477m2 0H501"/><use href="#a" x="501"/><use href="#t" x="13"/><use href="#y" x="434"/></svg>UniRef100_C6DV27</p>
<p><svg class="m"><path class="h" d="M14 5.5H501"/><path d="M14 5.5H458m2 0H478m2 0H501"/><use href="#a" x="501"/><use href="#t" x="13"/><use href="#y" x="466"/></svg>UniRef100_C5ZW73</p>
<p><svg class="m"><path d="M17 5.5H501"/><use href="#a" x="501"/><use href="#t" x="16"/></svg>UniRef100_C1SME4</p>
<p><svg class="m"><path class="h" d="M14 5.5H501"/><path d="M14 5.5H445m2 0H465m2 0H477m2 0H501"/><use href="#a" x="501"/><use href="#t" x="13"/><use href="#y" x="434"/></svg>UniRef100_A5WLG0</p>
<p><svg class="m"><path class="h" d="M14 5.5H501"/><path d="M14 5.5H445m2 0H465m2 0H477m2 0H501"/><use href="#a" x="501"/><use href="#t" x="13"/><use href="#y" x="434"/></svg>UniRef100_A1KHS4</p>
<p><svg class="m"><path class="h" d="M14 5.5H510"/><path d="M14 5.5H448m2 0H470m2 0H482m2 0H510"/><use href="#a" x="510"/><use href="#t" x="13"/><use href="#y" x="441"/></svg>UniRef100_C3JE83</p>
<p><svg class="m"><path class="h" d="M17 5.5H504"/><path d="M17 5.5H463m2 0H478m2 0H504"/><use href="#a" x="504"/><use href="#t" x="16"/><use href="#y" x="497"/></svg>UniRef100_C0A9P3</p>
<p><svg class="m"><path class="h" d="M17 5.5H498"/><path d="M17 5.5H455m2 0H498"/><use href="#a" x="498"/><use href="#t" x="16"/></svg>UniRef100_B7ASQ8</p>
<p><svg class="m"><path class="h" d="M14 5.5H504"/><path d="M14 5.5H471m2 0H494m2 0H504"/><use href="#a" x="504"/><use href="#t" x="13"/><use href="#y" x="463"/></svg>UniRef100_Q6BYS1</p>
<p><svg class="m"><path class="h" d="M17 5.5H501"/><path d="M17 5.5H394m2 0H440m2 0H492m2 0H501"/><use href="#a" x="501"/><use href="#t" x="16"/></svg>UniRef100_Q8XSV5</p>
<p><svg class="m"><path class="h" d="M31 5.5H501"/><path d="M31 5.5H394m2 0H501"/><use href="#a" x="501"/><use href="#t" x="30"/></svg>UniRef100_B6J3R8</p>
<p><svg class="g"><path class="h" d="M17 5.5H453"/><path d="M17 5.5H405m2 0H431m2 0H448m2 0H453"/><use href="#a" x="453"/><use href="#t" x="16"/><use href="#y" x="414"/></svg>UniRef100_UPI000..</p>
<p><svg class="m"><path class="h" d="M17 5.5H485"/><path d="M17 5.5H464m2 0H485"/><use href="#a" x="485"/><use href="#t" x="16"/><use href="#y" x="450"/></svg>UniRef100_C0YJH8</p>
<p><svg class="g"><path class="h" d="M17 5.5H501"/><path d="M17 5.5H394m2 0H440m2 0H492m2 0H501"/><use href="#a" x="501"/><use href="#t" x="16"/><use href="#y" x="479"/></svg>UniRef100_B5S4G2</p>
<p><svg class="m"><path class="h" d="M14 5.5H501"/><path d="M14 5.5H475m2 0H492m2 0H501"/><use href="#a" x="501"/><use href="#t" x="13"/></svg>UniRef100_Q0UTW0</p>
<p><svg class="m"><path class="h" d="M31 5.5H501"/><path d="M31 5.5H394m2 0H501"/><use href="#a" x="501"/><use href="#t" x="30"/></svg>UniRef100_A9N9C7</p>
<p><svg class="m"><path class="h" d="M31 5.5H501"/><path d="M31 5.5H394m2 0H501"/><use href="#a" x="501"/><use href="#t" x="30"/></svg>UniRef100_A9KDA0</p>
<p><svg class="m"><path class="h" d="M31 5.5H501"/><path d="M31 5.5H394m2 0H501"/><use href="#a" x="501"/><use href="#t" x="30"/></svg>UniRef100_B6J6H8</p>
<p><svg class="g"><path class="h" d="M14 5.5H510"/><path d="M14 5.5H448m2 0H470m2 0H482m2 0H510"/><use href="#a" x="510"/><use href="#t" x="13"/><use href="#y" x="441"/></svg>UniRef100_C0ZN14</p>
<p><svg class="m"><path class="h" d="M17 5.5H501"/><path d="M17 5.5H394m2 0H461m2 0H475m2 0H501"/><use href="#a" x="501"/><use href="#t" x="16"/></svg>UniRef100_B3PKI0</p>
<p><svg class="m"><path class="h" d="M17 5.5H498"/><path d="M17 5.5H459m2 0H472m2 0H498"/><use href="#a" x="498"/><use href="#t" x="16"/></svg>UniRef100_A4XGB3</p>
<p><svg class="m"><path d="M14 5.5H504"/><use href="#a" x="504"/><use href="#t" x="13"/></svg>UniRef100_Q1JWT2</p>
<p><svg class="m"><path class="h" d="M14 5.5H504"/><path d="M14 5.5H463m2 0H478m2 0H504"/><use href="#a" x="504"/><use href="#t" x="13"/><use href="#y" x="375"/></svg>UniRef100_C5PMD2</p>
<p><svg class="m"><path class="h" d="M17 5.5H507"/><path d="M17 5.5H398m4 0H465m2 0H480m2 0H507"/><use href="#a" x="507"/><use href="#t" x="16"/><use href="#y" x="404"/></svg>UniRef100_C4G3H2</p>
<p><svg class="m"><path class="h" d="M14 5.5H504"/><path d="M14 5.5H460m2 0H504"/><use href="#a" x="504"/><use href="#t" x="13"/></svg>UniRef100_A7F002</p>
<p><svg class="g"><path class="h" d="M17 5.5H501"/><path d="M17 5.5H394m2 0H461m2 0H475m2 0H501"/><use href="#a" x="501"/><use href="#t" x="16"/></svg>UniRef100_Q2KYF3</p>
<p><svg class="m"><path class="h" d="M14 5.5H485"/><path d="M14 5.5H431m2 0H452m2 0H465m2 0H485"/><use href="#a" x="485"/><use href="#t" x="13"/><use href="#y" x="423"/></svg>UniRef100_UPI000..</p>
<p><svg class="m"><path class="h" d="M14 5.5H507"/><path d="M14 5.5H399m2 0H465m2 0H483m2 0H507"/><use href="#a" x="507"/><use href="#t" x="13"/></svg>UniRef100_Q46TD6</p>
<p><svg class="m"><path class="h" d="M14 5.5H507"/><path d="M14 5.5H468m2 0H483m2 0H507"/><use href="#a" x="507"/><use href="#t" x="13"/></svg>UniRef100_Q30S54</p>
<p><svg class="m"><path class="h" d="M17 5.5H501"/><path d="M17 5.5H461m2 0H475m2 0H494m2 0H501"/><use href="#a" x="501"/><use href="#t" x="16"/></svg>UniRef100_C8WU41</p>
<p><svg class="m"><path class="h" d="M14 5.5H504"/><path d="M14 5.5H463m2 0H478m2 0H504"/><use href="#a" x="504"/><use href="#t" x="13"/><use href="#y" x="375"/></svg>UniRef100_C2G088</p>
<p><svg class="m"><path class="h" d="M14 5.5H504"/><path d="M14 5.5H460m2 0H504"/><use href="#a" x="504"/><use href="#t" x="13"/></svg>UniRef100_A6SHK9</p>
<p><svg class="g"><path d="M14 5.5H347"/><use href="#a" x="347"/><use href="#t" x="13"/></svg>UniRef100_Q9PB72</p>
<p><svg class="m"><path class="h" d="M14 5.5H498"/><path d="M14 5.5H362m2 0H397m2 0H459m2 0H472m2 0H498"/><use href="#a" x="498"/><use href="#t" x="13"/></svg>UniRef100_C8P9T9</p>
<p><svg class="m"><path class="h" d="M14 5.5H501"/><path d="M14 5.5H394m2 0H501"/><use href="#a" x="501"/><use href="#t" x="13"/></svg>UniRef100_C5S709</p>
<p><svg class="m"><path class="h" d="M17 5.5H501"/><path d="M17 5.5H394m2 0H440m2 0H492m2 0H501"/><use href="#a" x="501"/><use href="#t" x="16"/></svg>UniRef100_A3RTK9</p>
<p><svg class="m"><path class="h" d="M17 5.5H501"/><path d="M17 5.5H461m2 0H475m2 0H501"/><use href="#a" x="501"/><use href="#t" x="16"/></svg>UniRef100_Q1QHA8</p>
<p><svg class="m"><path d="M17 5.5H507"/><use href="#a" x="507"/><use href="#t" x="16"/></svg>UniRef100_Q4HR71</p>
<p><svg class="m"><path class="h" d="M17 5.5H498"/><path d="M17 5.5H459m2 0H472m2 0H498"/><use href="#a" x="498"/><use href="#t" x="16"/></svg>UniRef100_C7NER4</p>
<p><svg class="m"><path class="h" d="M14 5.5H504"/><path d="M14 5.5H464m3 0H504"/><use href="#a" x="504"/><use href="#t" x="13"/><use href="#y" x="474"/></svg>UniRef100_Q6CMI0</p>
<p><svg class="m"><path class="h" d="M14 5.5H501"/><path d="M14 5.5H461m2 0H475m2 0H501"/><use href="#a" x="501"/><use href="#t" x="13"/></svg>UniRef100_B3QGC4</p>
<p><svg class="m"><path class="h" d="M14 5.5H501"/><path d="M14 5.5H461m2 0H475m2 0H501"/><use href="#a" x="501"/><use href="#t" x="13"/></svg>UniRef100_Q6N765</p>
<p><svg class="m"><path class="h" d="M28 5.5H510"/><path d="M28 5.5H470m2 0H482m2 0H510"/><use href="#a" x="510"/><use href="#t" x="27"/></svg>UniRef100_A8KZ21</p>
<p><svg class="g"><path d="M14 5.5H347"/><use href="#a" x="347"/><use href="#t" x="13"/></svg>UniRef100_B0U3F5</p>
<p><svg class="g"><path d="M14 5.5H347"/><use href="#a" x="347"/><use href="#t" x="13"/></svg>UniRef100_Q3R5A6</p>
<p><svg class="m"><path class="h" d="M14 5.5H504"/><path d="M14 5.5H463m2 0H477m2 0H494m2 0H504"/><use href="#a" x="504"/><use href="#t" x="13"/></svg>UniRef100_Q2S338</p>
<p><svg class="m"><path class="h" d="M28 5.5H507"/><path d="M28 5.5H398m4 0H465m2 0H480m2 0H507"/><use href="#a" x="507"/><use href="#t" x="27"/><use href="#y" x="404"/></svg>UniRef100_C2L0W1</p>
<p><svg class="m"><path class="h" d="M17 5.5H507"/><path d="M17 5.5H399m2 0H465m2 0H476m2 0H507"/><use href="#a" x="507"/><use href="#t" x="16"/></svg>UniRef100_Q30YX1</p>
<p><svg class="m"><path class="h" d="M17 5.5H501"/><path d="M17 5.5H394m2 0H471m2 0H488m2 0H501"/><use href="#a" x="501"/><use href="#t" x="16"/><use href="#y" x="454"/></svg>UniRef100_Q87NA1</p>
<p><svg class="m"><path class="h" d="M17 5.5H507"/><path d="M17 5.5H399m2 0H465m2 0H483m2 0H507"/><use href="#a" x="507"/><use href="#t" x="16"/></svg>UniRef100_Q9F187</p>
<p><svg class="m"><path class="h" d="M17 5.5H507"/><path d="M17 5.5H399m2 0H465m2 0H483m2 0H507"/><use href="#a" x="507"/><use href="#t" x="16"/></svg>UniRef100_Q0K0V6</p>
<p><svg class="m"><path class="h" d="M14 5.5H507"/><path d="M14 5.5H399m2 0H507"/><use href="#a" x="507"/><use href="#t" x="13"/><use href="#y" x="496"/></svg>UniRef100_Q1LEK0</p>
<p><svg class="m"><path d="M14 5.5H501"/><use href="#a" x="501"/><use href="#t" x="13"/><use href="#y" x="493"/></svg>UniRef100_Q9P8N9</p>
<p><svg class="g"><path class="h" d="M28 5.5H442"/><path d="M28 5.5H356m2 0H422m2 0H442"/><use href="#a" x="442"/><use href="#t" x="27"/></svg>UniRef100_B7J432</p>
<p><svg class="m"><path class="h" d="M17 5.5H501"/><path d="M17 5.5H394m2 0H461m2 0H475m2 0H488m2 0H501"/><use href="#a" x="501"/><use href="#t" x="16"/></svg>UniRef100_UPI000..</p>
<p><svg class="g"><path class="h" d="M14 5.5H453"/><path d="M14 5.5H370m2 0H453"/><use href="#a" x="453"/><use href="#t" x="13"/></svg>UniRef100_Q4JXS1</p>
<p><svg class="m"><path class="h" d="M17 5.5H487"/><path d="M17 5.5H454m2 0H468m2 0H487"/><use href="#a" x="487"/><use href="#t" x="16"/></svg>UniRef100_A4FN94</p>
<p><svg class="m"><path d="M17 5.5H507"/><use href="#a" x="507"/><use href="#t" x="16"/></svg>UniRef100_Q4HGY8</p>
<p><svg class="g"><path class="h" d="M17 5.5H457"/><path d="M17 5.5H364m2 0H431m2 0H449m2 0H457"/><use href="#a" x="457"/><use href="#t" x="16"/></svg>UniRef100_Q1V6Z8</p>
<p><svg class="m"><path class="h" d="M17 5.5H498"/><path d="M17 5.5H471m3 0H498"/><use href="#a" x="498"/><use href="#t" x="16"/><use href="#y" x="369"/><use href="#y" x="452"/></svg>UniRef100_C7M816</p>
</div>

<div class="a" style="left:9px;top:2807px">Large gaps:</div>
<svg class="a" style="left:0;top:2800px" width="100" height="19"><path fill="#ffff66" d="M82 8h1v2h2v5h-5v-5h2z"/></svg>
<div class="a" style="left:88px;top:2807px">(in Query)/<span style="color:#00c8c8">-</span> (in Subject)</div>
<div class="a" style="left:439px;top:2807px;width:1px;height:8px;background:#444"></div>
<div class="a" style="left:456px;top:2807px;width:1px;height:8px;background:#444"></div>
<div class="a" style="left:440px;top:2810px;width:16px;height:3px;background:#00c8c8"></div>
<div class="a" style="left:459px;top:2807px">=100char.</div>
</body></html>
